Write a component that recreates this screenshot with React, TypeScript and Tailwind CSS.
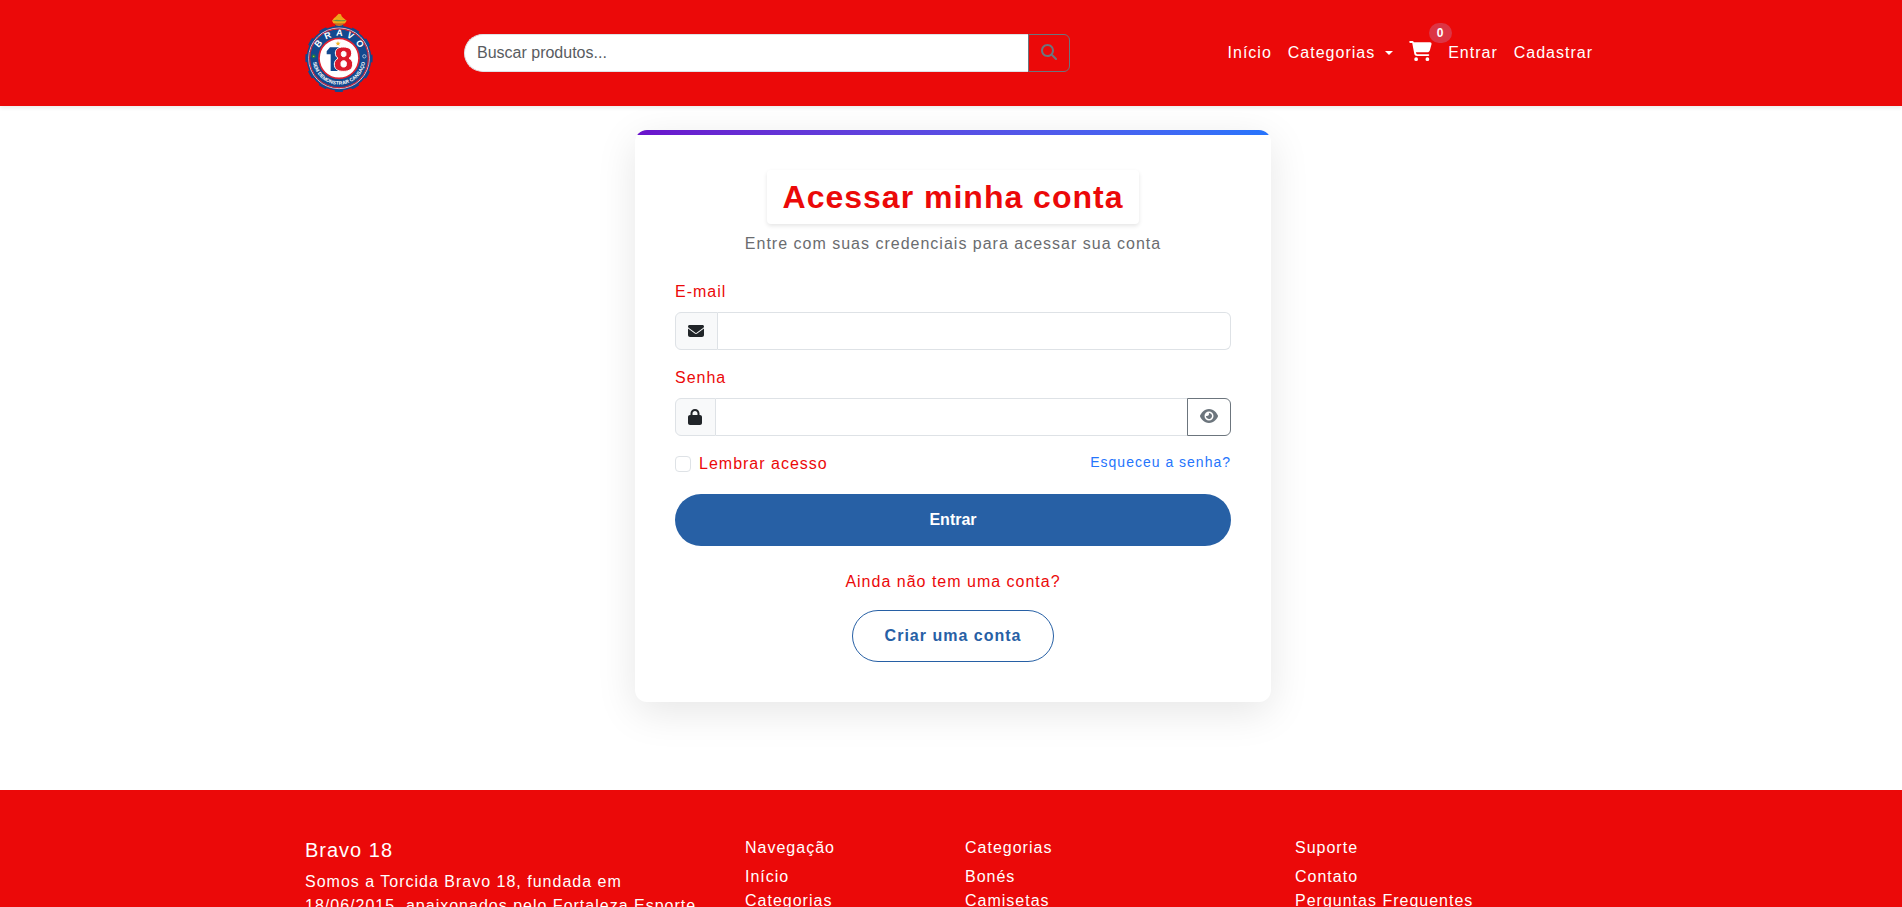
import React from 'react';
import {
  FaCartShopping,
  FaEnvelope,
  FaEye,
  FaLock,
  FaMagnifyingGlass,
} from 'react-icons/fa6';

interface FooterColumnProps {
  title: string;
  links: string[];
  className: string;
}

const Logo: React.FC = () => (
  <svg width="70" height="80" viewBox="9 0 210 240" role="img" aria-label="Bravo 18">
    <defs>
      <path id="logo-top" d="M 44 136 A 67 67 0 0 1 178 136" />
      <path id="logo-bottom" d="M 32 136 A 79 79 0 0 0 190 136" />
    </defs>
    <circle cx="111" cy="136" r="97" fill="none" stroke="#12498f" strokeWidth="8" strokeDasharray="24 26.8" strokeDashoffset="12" />
    <circle cx="111" cy="136" r="97" fill="#12498f" />
    <circle cx="111" cy="136" r="91" fill="none" stroke="#e8b9c4" strokeWidth="3" />
    <circle cx="111" cy="136" r="88" fill="none" stroke="#dd2233" strokeWidth="3" />
    <circle cx="111" cy="136" r="60" fill="#fff" stroke="#dd2233" strokeWidth="5" />
    <path d="M97 16 L104 8 L110 2 L117 4 L119 10 L126 17 Z" fill="#eba51d" />
    <path d="M90 23 L97 14 L125 16 L134 23 L129 31 L119 34 L111 39 L103 33 L94 31 Z" fill="#f0a81c" />
    <path d="M90 23 L104 20 L118 22 L134 21 L127 25 L106 25 Z" fill="#5d9a45" />
    <path d="M96 31 L128 31 L118 38 H104 Z" fill="#c96f24" />
    <text fontFamily="Liberation Sans, sans-serif" fontSize="27" fontWeight="700" fill="#fff" letterSpacing="13" textAnchor="middle">
      <textPath href="#logo-top" startOffset="53%">BRAVO</textPath>
    </text>
    <text fontFamily="Liberation Sans, sans-serif" fontSize="15" fontWeight="700" fill="#fff" textAnchor="middle">
      <textPath href="#logo-bottom" startOffset="50%">SEM DEMONSTRAR CANSAÇO</textPath>
    </text>
    <circle cx="35" cy="130" r="6" fill="#1b7a4b" />
    <circle cx="35" cy="130" r="2" fill="#e6d33c" />
    <circle cx="187" cy="130" r="5" fill="#12498f" stroke="#a9bfda" strokeWidth="3" />
    <path d="M108 84 L110 89 L116 89 L111 93 L113 98 L108 95 L103 98 L105 93 L100 89 L106 89 Z" fill="#f3b323" />
    <path d="M84 103 H112 V174 H86 V124 H74 V115 Z" fill="#12498f" />
    <path
      fillRule="evenodd"
      d="M124 102 C141 102 149 109 149 121 C149 129 145 133 141 136 C149 140 152 146 152 153 C152 168 143 175 124 175 C106 175 97 168 97 153 C97 146 101 140 108 136 C103 132 100 128 100 120 C100 109 108 102 124 102 Z M125 115 C121 115 118 117 118 121 V125 C118 129 121 131 125 131 C129 131 132 129 132 125 V121 C132 117 129 115 125 115 Z M125 143 C120 143 117 146 117 150 V155 C117 160 120 162 125 162 C130 162 133 160 133 155 V150 C133 146 130 143 125 143 Z"
      fill="#dd1a2b"
      stroke="#fff"
      strokeWidth="3"
    />
  </svg>
);

const Header: React.FC = () => (
  <header className="relative bg-[#eb0909] py-[13px] pl-1 shadow-[0_2px_4px_rgba(0,0,0,0.08)]">
    <div className="mx-auto flex w-full max-w-[1320px] items-center px-3">
      <a href="#" className="shrink-0">
        <Logo />
      </a>

      <form className="ml-[89px] flex h-[38px] w-full max-w-[606px]">
        <input
          type="search"
          aria-label="Buscar produtos"
          placeholder="Buscar produtos..."
          className="min-w-0 flex-1 rounded-l-full border border-r-0 border-[#dee2e6] bg-white px-3 placeholder:text-[#595c5f]"
        />
        <button
          type="submit"
          aria-label="Buscar"
          className="flex w-[42px] items-center justify-center rounded-r-md border border-[#6c757d] pb-0.5 text-[#6c757d]"
        >
          <FaMagnifyingGlass size={16} />
        </button>
      </form>

      <nav className="ml-auto flex items-center gap-4 pr-2 tracking-[1px] text-white">
        <a href="#">Início</a>
        <a href="#" className="flex items-center gap-[10px]">
          Categorias
          <svg width="8" height="4" viewBox="0 0 8 4" fill="currentColor" aria-hidden="true">
            <path d="M0 0h8L4 4z" />
          </svg>
        </a>
        <a href="#" aria-label="Carrinho" className="relative pb-1">
          <FaCartShopping className="h-5 w-[23px]" />
          <span className="absolute -top-[18px] left-5 flex h-5 w-[23px] items-center justify-center rounded-full bg-[#dc3545] text-xs font-bold">
            0
          </span>
        </a>
        <a href="#">Entrar</a>
        <a href="#">Cadastrar</a>
      </nav>
    </div>
  </header>
);

const LoginCard: React.FC = () => (
  <section className="w-full max-w-[636px] overflow-hidden rounded-xl bg-white shadow-[0_10px_40px_rgba(0,0,0,0.1)]">
    <div className="h-[5px] bg-linear-to-r from-[#6a11cb] to-[#2575fc]" />
    <div className="px-10 pt-[35px] pb-10">
      <div className="mb-6 flex flex-col items-center gap-2">
        <h1 className="rounded-sm px-4 py-2 text-[32px] leading-[38px] font-bold text-[#eb0909] shadow-[0_2px_4px_rgba(0,0,0,0.1)]">
          Acessar minha conta
        </h1>
        <p className="text-[#6a6c6f]">Entre com suas credenciais para acessar sua conta</p>
      </div>

      <form>
        <label htmlFor="email" className="mb-2 block text-[#eb0909]">E-mail</label>
        <div className="mb-4 flex h-[38px]">
          <span className="flex w-[43px] items-center rounded-l-md border border-[#dee2e6] bg-[#f8f9fa] pl-3 text-[#212529]">
            <FaEnvelope size={16} />
          </span>
          <input
            id="email"
            type="email"
            className="min-w-0 flex-1 rounded-r-md border border-l-0 border-[#dee2e6] px-3"
          />
        </div>

        <label htmlFor="password" className="mb-2 block text-[#eb0909]">Senha</label>
        <div className="mb-4 flex h-[38px]">
          <span className="flex w-[41px] items-center rounded-l-md border border-[#dee2e6] bg-[#f8f9fa] pl-3 text-[#212529]">
            <FaLock className="h-4 w-[14px]" />
          </span>
          <input
            id="password"
            type="password"
            className="min-w-0 flex-1 border-y border-[#dee2e6] px-3"
          />
          <button
            type="button"
            aria-label="Mostrar senha"
            className="flex w-11 items-center justify-center rounded-r-md border border-[#6c757d] pb-0.5 text-[#6c757d]"
          >
            <FaEye className="h-4 w-[18px]" />
          </button>
        </div>

        <div className="mb-4 flex h-[26px] items-start justify-between">
          <div className="flex items-center gap-2">
            <input
              id="remember"
              type="checkbox"
              className="size-4 appearance-none rounded-sm border border-[#dee2e6] checked:bg-[#2575fc]"
            />
            <label htmlFor="remember" className="text-[#eb0909]">Lembrar acesso</label>
          </div>
          <a href="#" className="text-sm text-[#2575fc]">Esqueceu a senha?</a>
        </div>

        <button
          type="submit"
          className="h-13 w-full rounded-full bg-[#2760a5] font-bold tracking-normal text-white"
        >
          Entrar
        </button>
      </form>

      <div className="mt-6 flex flex-col items-center gap-4">
        <p className="text-[#eb0909]">Ainda não tem uma conta?</p>
        <a
          href="#"
          className="flex h-13 items-center rounded-full border border-[#2760a5] px-8 font-bold text-[#2760a5]"
        >
          Criar uma conta
        </a>
      </div>
    </div>
  </section>
);

const FooterColumn: React.FC<FooterColumnProps> = ({ title, links, className }) => (
  <div className={className}>
    <h6 className="mb-2 leading-[19px]">{title}</h6>
    <ul>
      {links.map((link) => (
        <li key={link}>
          <a href="#">{link}</a>
        </li>
      ))}
    </ul>
  </div>
);

const Footer: React.FC = () => (
  <footer className="bg-[#eb0909] py-12 pl-1 tracking-[1px] text-white">
    <div className="mx-auto grid w-full max-w-[1320px] grid-cols-12">
      <div className="col-span-4 px-3">
        <h5 className="mb-2 text-xl leading-6">Bravo 18</h5>
        <p>Somos a Torcida Bravo 18, fundada em 18/06/2015, apaixonados pelo Fortaleza Esporte</p>
      </div>
      <FooterColumn className="col-span-2 px-3" title="Navegação" links={['Início', 'Categorias']} />
      <FooterColumn className="col-span-3 px-3" title="Categorias" links={['Bonés', 'Camisetas']} />
      <FooterColumn className="col-span-3 px-3" title="Suporte" links={['Contato', 'Perguntas Frequentes']} />
    </div>
  </footer>
);

const App: React.FC = () => {
  return (
    <div className="h-screen overflow-hidden bg-white font-['Liberation_Sans',Arial,sans-serif] text-base">
      <Header />
      <main className="flex justify-center pt-6 pb-[88px] pl-1 tracking-[1px]">
        <LoginCard />
      </main>
      <Footer />
    </div>
  );
};

export default App;
